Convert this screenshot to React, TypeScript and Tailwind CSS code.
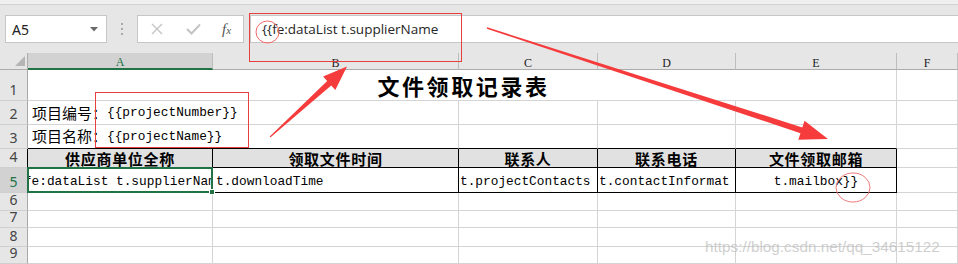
import React from "react";

const GL = "border-[#d4d4d4]";
const mono = "font-['Liberation_Mono','Noto_Sans_CJK_SC',monospace] text-[12.8px] text-black";
const cjk = "font-['Noto_Sans_CJK_SC',sans-serif] text-[15px] text-black";

function RowHead({ n, sel, dark }: { n: number; sel?: boolean; dark?: boolean }) {
  return (
    <div
      className={`flex items-end justify-center pb-[1px] border-b border-r font-['Noto_Sans','Liberation_Sans',sans-serif] text-[14px] leading-none ${
        sel ? "bg-[#d2d2d2] text-[#217346]" : "bg-[#e6e6e6] text-[#444]"
      } ${dark ? "border-r-black border-b-[#cfcfcf]" : "border-r-[#a8a8a8] border-b-[#cfcfcf]"}`}
    >
      <span className="pb-[2px]">{n}</span>
    </div>
  );
}

function ColHead({ l, sel }: { l: string; sel?: boolean }) {
  return (
    <div
      className={`flex items-center justify-center font-['Liberation_Serif',serif] text-[12px] leading-none border-r border-[#bdbdbd] ${
        sel ? "bg-[#d2d2d2] text-[#217346] border-b-2 border-b-[#217346]" : "bg-[#e6e6e6] text-[#222] border-b border-b-[#ababab]"
      }`}
    >
      <span className="pt-[3px]">{l}</span>
    </div>
  );
}

function Cell({ className = "", children }: { className?: string; children?: React.ReactNode }) {
  return <div className={`border-r border-b ${GL} ${className}`}>{children}</div>;
}

export default function App() {
  return (
    <div className="relative w-[958px] h-[264px] overflow-hidden bg-white">
      {/* top strip */}
      <div className="h-[5px] bg-[#f0f0f0] border-b border-[#d2d2d2]" />
      {/* formula bar */}
      <div className="h-[48px] bg-[#e6e6e6] flex items-start pt-[10px] pl-[5px]">
        <div className="w-[102px] h-[28px] bg-white border border-[#c6c6c6] flex items-center pl-[6px] pr-[8px] justify-between">
          <span className="font-['Noto_Sans','Liberation_Sans',sans-serif] text-[14px] text-[#222]">A5</span>
          <svg width="8" height="5" viewBox="0 0 8 5">
            <path d="M0 0 L8 0 L4 4.5 Z" fill="#6a6a6a" />
          </svg>
        </div>
        <div className="w-[30px] h-[28px] flex flex-col items-center justify-center gap-[3px]">
          <div className="w-[2px] h-[2px] bg-[#a8a8a8]" />
          <div className="w-[2px] h-[2px] bg-[#a8a8a8]" />
          <div className="w-[2px] h-[2px] bg-[#a8a8a8]" />
        </div>
        <div className="w-[107px] h-[28px] bg-white border border-[#c6c6c6] flex items-center">
          <svg className="ml-[13px]" width="12" height="12" viewBox="0 0 12 12">
            <path d="M1 1 L11 11 M11 1 L1 11" stroke="#c4c4c4" strokeWidth="1.4" fill="none" />
          </svg>
          <svg className="ml-[23px]" width="15" height="12" viewBox="0 0 15 12">
            <path d="M1 6 L5.5 10.5 L14 1.5" stroke="#c4c4c4" strokeWidth="2" fill="none" />
          </svg>
          <span className="ml-[21px] font-['Liberation_Serif',serif] italic text-[15px] text-[#555] leading-none">
            f<span className="text-[11px]">x</span>
          </span>
        </div>
        <div className="ml-[6px] flex-1 h-[28px] bg-white border border-[#c6c6c6] border-r-0 flex items-center pl-[11px]">
          <span className="font-['Open_Sans','Noto_Sans',sans-serif] text-[13.5px] text-[#262626] whitespace-nowrap">
            {"{{fe:dataList t.supplierName"}
          </span>
        </div>
      </div>

      {/* sheet grid */}
      <div className="grid grid-cols-[28px_185px_246px_139px_138px_161px_61px] grid-rows-[17px_31px_24px_24px_19px_25px_18px_17px_19px_17px]">
        {/* column header row */}
        <div className="relative bg-[#e6e6e6] border-r border-b border-[#ababab]">
          <svg className="absolute right-[2px] bottom-[3px]" width="10" height="10" viewBox="0 0 10 10">
            <path d="M10 0 L10 10 L0 10 Z" fill="#b5b5b5" />
          </svg>
        </div>
        <ColHead l="A" sel />
        <ColHead l="B" />
        <ColHead l="C" />
        <ColHead l="D" />
        <ColHead l="E" />
        <ColHead l="F" />

        {/* row 1 */}
        <RowHead n={1} />
        <Cell className="col-span-5 flex items-center justify-center">
          <span className="font-['Noto_Sans_CJK_SC',sans-serif] font-bold text-[22px] tracking-[2.6px] text-black pl-[3px] leading-none">
            文件领取记录表
          </span>
        </Cell>
        <Cell />

        {/* row 2 */}
        <RowHead n={2} />
        <Cell className="col-span-2 flex items-center pl-[4px] pt-[1px] whitespace-nowrap">
          <span className={cjk}>项目编号：</span>
          <span className={mono}>{"{{projectNumber}}"}</span>
        </Cell>
        <Cell />
        <Cell />
        <Cell />
        <Cell />

        {/* row 3 */}
        <RowHead n={3} />
        <div className="col-span-2 border-r border-r-[#d4d4d4] border-b border-b-black flex items-center pl-[4px] whitespace-nowrap">
          <span className={cjk}>项目名称：</span>
          <span className={mono}>{"{{projectName}}"}</span>
        </div>
        <div className="border-r border-r-[#d4d4d4] border-b border-b-black" />
        <div className="border-r border-r-[#d4d4d4] border-b border-b-black" />
        <div className="border-r border-r-[#d4d4d4] border-b border-b-black" />
        <Cell />

        {/* row 4 */}
        <RowHead n={4} dark />
        {["供应商单位全称", "领取文件时间", "联系人", "联系电话", "文件领取邮箱"].map((t) => (
          <div key={t} className="bg-[#e1e1e1] border-r border-b border-black flex items-center justify-center">
            <span className="font-['Noto_Sans_CJK_SC',sans-serif] font-bold text-[15px] tracking-[0.7px] text-black leading-none">
              {t}
            </span>
          </div>
        ))}
        <Cell />

        {/* row 5 */}
        <RowHead n={5} sel dark />
        <div className="relative border-r border-b border-black">
          <div className="absolute inset-0 overflow-hidden flex items-center justify-center whitespace-nowrap pt-[3px] pr-[8px]">
            <span className={mono}>{"{{fe:dataList t.supplierName"}</span>
          </div>
          <div className="absolute -left-[1px] -top-[1px] -right-[1px] -bottom-[1px] border-2 border-[#217346]" />
          <div className="absolute -right-[3px] -bottom-[3px] w-[6px] h-[6px] bg-[#217346] border border-white" />
        </div>
        <div className="border-r border-b border-black flex items-center pl-[3px] pt-[3px] overflow-hidden whitespace-nowrap">
          <span className={mono}>t.downloadTime</span>
        </div>
        <div className="border-r border-b border-black flex items-center pl-[1px] pt-[3px] overflow-hidden whitespace-nowrap">
          <span className={mono}>t.projectContacts</span>
        </div>
        <div className="border-r border-b border-black flex items-center pl-[1px] pt-[3px] overflow-hidden whitespace-nowrap">
          <span className={mono}>t.contactInformat</span>
        </div>
        <div className="border-r border-b border-black flex items-center justify-center pt-[3px] overflow-hidden whitespace-nowrap">
          <span className={mono}>{"t.mailbox}}"}</span>
        </div>
        <Cell />

        {/* rows 6-9 */}
        {[6, 7, 8, 9].map((n) => (
          <React.Fragment key={n}>
            <RowHead n={n} />
            <Cell />
            <Cell />
            <Cell />
            <Cell />
            <Cell />
            <Cell />
          </React.Fragment>
        ))}
      </div>

      {/* watermark */}
      <div className="absolute left-[705px] top-[236px] font-['Liberation_Sans',Arial,sans-serif] text-[15.3px] text-[rgba(190,190,190,0.75)] whitespace-nowrap pointer-events-none">
        https://blog.csdn.net/qq_34615122
      </div>

      {/* annotations */}
      <svg className="absolute left-0 top-0 pointer-events-none" width="958" height="264" viewBox="0 0 958 264">
        <rect x="249.5" y="13.5" width="212" height="48" fill="none" stroke="#e8403f" strokeWidth="1" />
        <ellipse cx="267.5" cy="32" rx="11.5" ry="11" fill="none" stroke="#f06a6a" strokeWidth="1" />
        <rect x="95.5" y="92.5" width="153" height="55" fill="none" stroke="#e8403f" strokeWidth="1" />
        <ellipse cx="853" cy="187.5" rx="17" ry="14.5" fill="none" stroke="#f07a7a" strokeWidth="1" />
        <polygon
          points="270.3,137.4 331.2,85.4 335.3,89.9 347,66.5 323.1,76.5 327.2,81.0 269.7,136.6"
          fill="#f53b3b"
        />
        <polygon
          points="486.8,28.7 800.5,133.2 798.3,139.8 828,139 804.5,120.8 802.3,127.4 487.2,27.3"
          fill="#f53b3b"
        />
      </svg>
    </div>
  );
}
